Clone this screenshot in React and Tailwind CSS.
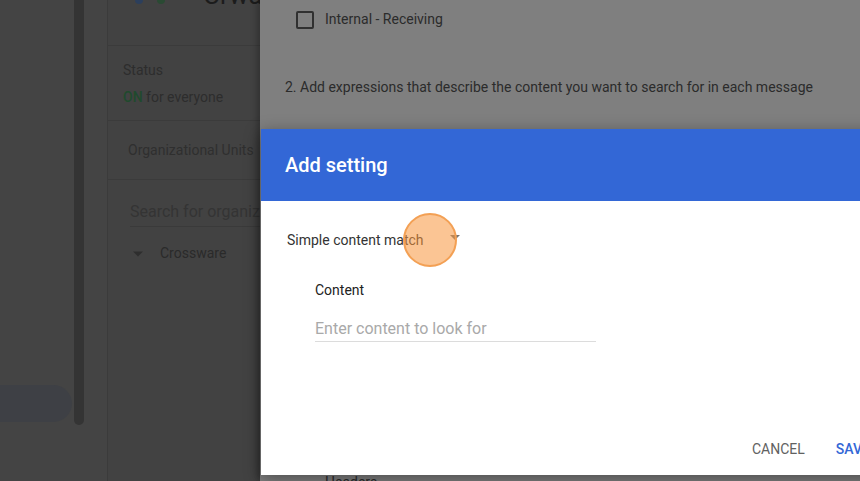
import React from "react";

const font = { fontFamily: "Roboto, 'Noto Sans', sans-serif" };

const App = () => {
  return (
    <div
      className="relative w-[860px] h-[481px] overflow-hidden flex bg-[#444444]"
      style={font}
    >
      {/* left nav */}
      <div className="w-[74px] flex flex-col pt-[385px] bg-[#444444]">
        <div className="h-[37px] w-[72px] rounded-r-full bg-[#3e4045]" />
      </div>
      {/* scrollbar */}
      <div className="w-[10px] flex flex-col">
        <div className="h-[425px] bg-[#343434] rounded-b-full" />
      </div>
      <div className="w-[23px] bg-[#444444]" />

      {/* settings panel */}
      <div className="w-[153px] border-l border-[#3b3b3b] bg-[#424242] flex flex-col">
        <div className="h-[46px] border-b border-[#3b3b3b] flex items-start pl-[27px]">
          <div className="flex gap-[14px] -mt-[4px]">
            <div className="w-[8px] h-[8px] rounded-b-full bg-[#2c3f5c]" />
            <div className="w-[8px] h-[8px] rounded-b-full bg-[#2a4a33]" />
          </div>
          <span className="ml-[38px] -mt-[20px] text-[26px] leading-[30px] text-[#1c1c1c] whitespace-nowrap">
            Crwa
          </span>
        </div>
        <div className="h-[75px] border-b border-[#3b3b3b] pl-[15px] pt-[15px] text-[14px] leading-[18px] text-[#2d2d2d]">
          <div>Status</div>
          <div className="mt-[9px] whitespace-nowrap">
            <span className="font-medium text-[#1f4a2d]">ON</span> for everyone
          </div>
        </div>
        <div className="h-[59px] border-b border-[#3b3b3b] pl-[20px] pt-[20px] text-[14px] leading-[18px] text-[#2f2f2f] whitespace-nowrap">
          Organizational Units
        </div>
        <div className="pl-[22px] pt-[23px]">
          <div className="h-[24px] border-b border-[#3a3a3a] text-[16px] leading-[18px] text-[#343434] whitespace-nowrap overflow-hidden">
            Search for organizational units
          </div>
          <div className="flex items-center mt-[16px] text-[14px] text-[#2a2a2a]">
            <svg width="10" height="6" viewBox="0 0 10 5" className="ml-[3px]">
              <path d="M0 0 L10 0 L5 5 Z" fill="#2e2e2e" />
            </svg>
            <span className="ml-[17px]">Crossware</span>
          </div>
        </div>
      </div>

      {/* right sheet */}
      <div className="flex-1 bg-[#7f7f7f] shadow-[-3px_0_6px_rgba(0,0,0,0.25)] relative">
        <div className="flex items-center pl-[36px] pt-[9px]">
          <div className="w-[18px] h-[18px] rounded-[2px] border-2 border-[#303030]" />
          <span className="ml-[11px] text-[14px] text-[#2b2b2b]">
            Internal - Receiving
          </span>
        </div>
        <div className="pl-[25px] mt-[47px] text-[14px] text-[#2b2b2b] whitespace-nowrap">
          2. Add expressions that describe the content you want to search for in each message
        </div>
        <div className="absolute left-[65px] top-[472px] text-[14px] text-[#2b2b2b]">
          Headers
        </div>
      </div>

      {/* dialog */}
      <div className="absolute left-[261px] top-[129px] w-[640px] h-[346px] bg-white flex flex-col shadow-[0_4px_16px_rgba(0,0,0,0.4)]">
        <div className="h-[72px] bg-[#3367d6] flex items-center pl-[24px] text-white text-[20px] font-medium">
          Add setting
        </div>
        <div className="flex-1 flex flex-col pl-[26px]">
          <div className="flex items-center mt-[30px] h-[18px]">
            <span className="text-[14px] text-[#333333]">Simple content match</span>
            <svg width="10" height="5" viewBox="0 0 10 5" className="ml-[26px] -mt-[6px]">
              <path d="M0 0 L10 0 L5 5 Z" fill="#757575" />
            </svg>
          </div>
          <div className="pl-[28px] mt-[31px] text-[14px] text-[#222222]">Content</div>
          <div className="ml-[28px] mt-[18px] w-[281px] border-b border-[#dcdcdc] pb-[2px] text-[16px] leading-[20px] text-[#a9a9a9]">
            Enter content to look for
          </div>
          <div className="flex-1" />
          <div className="flex items-center gap-[31px] pl-[465px] pb-[15px] text-[14px]">
            <span className="text-[#616161]">CANCEL</span>
            <span className="text-[#3367d6] font-medium">SAVE</span>
          </div>
        </div>
      </div>

      {/* click marker */}
      <div className="absolute left-[403px] top-[213px] w-[54px] h-[54px] rounded-full border-2 border-[#f3a054] bg-[#f7963c]/55" />
    </div>
  );
};

export default App;
